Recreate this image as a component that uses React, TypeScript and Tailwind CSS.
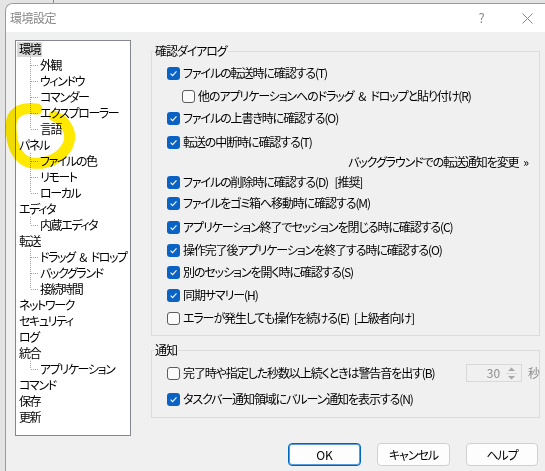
import React from "react";

type Node = { t: string; sel?: boolean; children?: string[] };

const tree: Node[] = [
  { t: "環境", sel: true, children: ["外観", "ウィンドウ", "コマンダー", "エクスプローラー", "言語"] },
  { t: "パネル", children: ["ファイルの色", "リモート", "ローカル"] },
  { t: "エディタ", children: ["内蔵エディタ"] },
  { t: "転送", children: ["ドラッグ\u2002&\u2002ドロップ", "バックグランド", "接続時間"] },
  { t: "ネットワーク" },
  { t: "セキュリティ" },
  { t: "ログ" },
  { t: "統合", children: ["アプリケーション"] },
  { t: "コマンド" },
  { t: "保存" },
  { t: "更新" },
];

function Connector({ last }: { last: boolean }) {
  return (
    <svg width="24" height="16" className="shrink-0" shapeRendering="crispEdges">
      <line x1="14.5" y1="0" x2="14.5" y2={last ? 8 : 16} stroke="#a0a0a0" strokeDasharray="1 1" />
      <line x1="15" y1="8.5" x2="23" y2="8.5" stroke="#a0a0a0" strokeDasharray="1 1" />
    </svg>
  );
}

function Box({ checked }: { checked?: boolean }) {
  if (checked)
    return (
      <span className="w-[13px] h-[13px] rounded-[3px] bg-[#0a63c4] flex items-center justify-center shrink-0">
        <svg width="9" height="9" viewBox="0 0 9 9">
          <path d="M1.6 4.6 L3.6 6.6 L7.5 2.4" stroke="#fff" strokeWidth="1.1" fill="none" />
        </svg>
      </span>
    );
  return <span className="w-[13px] h-[13px] rounded-[3px] border border-[#5c5c5c] bg-[#fbfbfb] shrink-0" />;
}

function Row({ checked, label, indent, mt }: { checked?: boolean; label: string; indent?: boolean; mt: string }) {
  return (
    <div className={`flex items-center h-4 ${indent ? "pl-[30px]" : "pl-[15px]"} ${mt}`}>
      <Box checked={checked} />
      <span className="ml-[3px] whitespace-pre">{label}</span>
    </div>
  );
}

export default function App() {
  return (
    <div
      className="relative w-[545px] h-[471px] overflow-hidden bg-[#e4e4e4] text-[12px] leading-4 tracking-[-1.1px] text-black [font-feature-settings:'palt']"
      style={{ fontFamily: "'Noto Sans CJK JP', 'Noto Sans', sans-serif" }}
    >
      <div className="h-[3px] flex">
        <div className="ml-[53px] w-px h-full bg-[#8c8c8c]" />
      </div>
      <div className="ml-[5px] w-[545px] h-[468px] border-l border-t border-[#9c9c9c] rounded-tl-[8px] overflow-hidden flex flex-col">
        {/* title bar */}
        <div className="h-[28px] bg-white flex items-center shrink-0">
          <span className="pl-[4px] flex-1 text-[#8a8a8a] tracking-[-0.5px]">環境設定</span>
          <span className="w-[46px] text-center text-[#8a8a8a] text-[13px]">?</span>
          <span className="w-[46px] flex justify-center">
            <svg width="11" height="11" viewBox="0 0 11 11">
              <path d="M0.5 0.5 L10.5 10.5 M10.5 0.5 L0.5 10.5" stroke="#8a8a8a" strokeWidth="1" />
            </svg>
          </span>
        </div>

        {/* body */}
        <div className="flex-1 bg-[#f0f0f0] flex items-start pt-[8px]">
          <div className="ml-[9px] w-[116px] h-[396px] border border-[#828790] bg-white shrink-0 tracking-[-1.4px]">
            {tree.map((n) => (
              <div key={n.t}>
                <div className="h-4 flex items-center pl-[1px]">
                  <span className={`h-[15px] px-[2px] flex items-center ${n.sel ? "bg-[#d9d9d9]" : ""}`}>{n.t}</span>
                </div>
                {n.children?.map((c, i) => (
                  <div key={c} className="h-4 flex items-center">
                    <Connector last={i === n.children!.length - 1} />
                    <span className="whitespace-pre">{c}</span>
                  </div>
                ))}
              </div>
            ))}
          </div>

          <div className="ml-[20px] w-[389px] mt-[3px] shrink-0">
            <fieldset className="h-[293px] border border-[#dcdcdc]">
              <legend className="ml-[2px] px-[1px]">確認ダイアログ</legend>
              <Row checked label="ファイルの転送時に確認する(T)" mt="mt-[6px]" />
              <Row indent label={"他のアプリケーションへのドラッグ\u2002&\u2002ドロップと貼り付け(R)"} mt="mt-[7px]" />
              <Row checked label="ファイルの上書き時に確認する(O)" mt="mt-[6px]" />
              <Row checked label="転送の中断時に確認する(T)" mt="mt-[8px]" />
              <div className="h-4 mt-[4px] flex justify-end pr-[11px] whitespace-pre">{"バックグラウンドでの転送通知を変更\u2002»"}</div>
              <Row checked label={"ファイルの削除時に確認する(D)\u2002 [推奨]"} mt="mt-[4px]" />
              <Row checked label="ファイルをゴミ箱へ移動時に確認する(M)" mt="mt-[5px]" />
              <Row checked label="アプリケーション終了でセッションを閉じる時に確認する(C)" mt="mt-[8px]" />
              <Row checked label="操作完了後アプリケーションを終了する時に確認する(O)" mt="mt-[7px]" />
              <Row checked label="別のセッションを開く時に確認する(S)" mt="mt-[6px]" />
              <Row checked label="同期サマリー(H)" mt="mt-[7px]" />
              <Row label={"エラーが発生しても操作を続ける(E)\u2002[上級者向け]"} mt="mt-[7px]" />
            </fieldset>

            <fieldset className="mt-[6px] border border-[#dcdcdc] pb-[10px]">
              <legend className="ml-[2px] px-[1px]">通知</legend>
              <div className="flex items-center h-[18px] pl-[15px] mt-[6px]">
                <Box />
                <span className="ml-[3px] flex-1 whitespace-nowrap">完了時や指定した秒数以上続くときは警告音を出す(B)</span>
                <div className="w-[56px] h-[18px] border border-[#d9d9d9] bg-[#f0f0f0] flex">
                  <span className="flex-1 text-right pr-[4px] text-[#8d8d8d] leading-4 tracking-normal">30</span>
                  <div className="w-[15px] mr-[2px] flex flex-col items-center justify-center gap-[1px]">
                    <svg width="9" height="6" viewBox="0 0 9 6">
                      <path d="M1 5 L4.5 1.5 L8 5 Z" fill="#a8a8a8" />
                    </svg>
                    <div className="w-[11px] h-px bg-[#d9d9d9]" />
                    <svg width="9" height="6" viewBox="0 0 9 6">
                      <path d="M1 1 L4.5 4.5 L8 1 Z" fill="#a8a8a8" />
                    </svg>
                  </div>
                </div>
                <span className="ml-[6px] text-[#8d8d8d]">秒</span>
              </div>
              <Row checked label="タスクバー通知領域にバルーン通知を表示する(N)" mt="mt-[9px]" />
            </fieldset>

            <div className="mt-[25px] flex justify-end gap-[16px] pr-[2px] tracking-normal">
              <button className="w-[73px] h-[23px] rounded-[4px] bg-[#fdfdfd] border border-[#0067c0] shadow-[inset_0_0_0_1px_#5a9ad8] text-[12px]">
                OK
              </button>
              <button className="w-[73px] h-[23px] rounded-[4px] bg-[#fdfdfd] border border-[#d0d0d0] text-[12px] tracking-[-1px]">
                キャンセル
              </button>
              <button className="w-[72px] h-[23px] rounded-[4px] bg-[#fdfdfd] border border-[#d0d0d0] text-[12px] tracking-[-1px]">
                ヘルプ
              </button>
            </div>
          </div>
        </div>
      </div>

      {/* yellow hand-drawn annotation */}
      <svg className="absolute left-0 top-0 pointer-events-none mix-blend-multiply" width="90" height="180" viewBox="0 0 90 180">
        <path
          d="M37 109 C20 107, 11 113, 11 126 C11 146, 18 161, 32 163 C48 165, 62 157, 68 145 C73 133, 66 121, 54 116"
          stroke="#ffe900"
          strokeWidth="11"
          strokeLinecap="round"
          fill="none"
        />
      </svg>
    </div>
  );
}
